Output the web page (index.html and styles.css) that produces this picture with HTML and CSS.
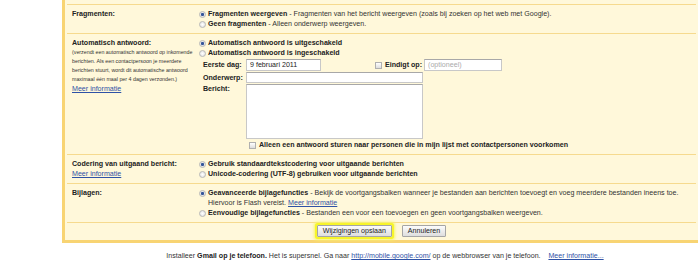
FILE: index.html
```html
<!DOCTYPE html>
<html lang="nl">
<head>
    <meta charset="UTF-8">
    <meta name="viewport" content="width=device-width, initial-scale=1.0">
    <title>Instellingen</title>
    <link rel="stylesheet" href="styles.css">
</head>
<body>
    <div class="settings">
        <div class="row">
            <div class="label">Fragmenten:</div>
            <div class="value">
                <div class="option"><span class="radio on"></span><span><b>Fragmenten weergeven</b> - Fragmenten van het bericht weergeven (zoals bij zoeken op het web met Google).</span></div>
                <div class="option"><span class="radio"></span><span><b>Geen fragmenten</b> - Alleen onderwerp weergeven.</span></div>
            </div>
        </div>

        <div class="row row-auto">
            <div class="label">
                Automatisch antwoord:
                <div class="note">(verzendt een automatisch antwoord op inkomende<br>berichten. Als een contactpersoon je meerdere<br>berichten stuurt, wordt dit automatische antwoord<br>maximaal één maal per 4 dagen verzonden.)</div>
                <a href="#" class="more">Meer informatie</a>
            </div>
            <div class="value">
                <div class="option"><span class="radio on"></span><b>Automatisch antwoord is uitgeschakeld</b></div>
                <div class="option"><span class="radio"></span><b>Automatisch antwoord is ingeschakeld</b></div>
                <div class="fields">
                    <div class="field">
                        <label>Eerste dag:</label>
                        <input type="text" class="date" value="9 februari 2011">
                        <span class="check end-check"></span>
                        <label class="end-label">Eindigt op:</label>
                        <input type="text" class="date end-date" placeholder="(optioneel)">
                    </div>
                    <div class="field">
                        <label>Onderwerp:</label>
                        <input type="text" class="subject">
                    </div>
                    <div class="field">
                        <label>Bericht:</label>
                        <textarea class="message"></textarea>
                    </div>
                    <div class="field contacts">
                        <span class="check"></span><b>Alleen een antwoord sturen naar personen die in mijn lijst met contactpersonen voorkomen</b>
                    </div>
                </div>
            </div>
        </div>

        <div class="row">
            <div class="label">
                Codering van uitgaand bericht:<br>
                <a href="#" class="more">Meer informatie</a>
            </div>
            <div class="value">
                <div class="option"><span class="radio on"></span><b>Gebruik standaardtekstcodering voor uitgaande berichten</b></div>
                <div class="option"><span class="radio"></span><b>Unicode-codering (UTF-8) gebruiken voor uitgaande berichten</b></div>
            </div>
        </div>

        <div class="row">
            <div class="label">Bijlagen:</div>
            <div class="value">
                <div class="option"><span class="radio on"></span><span><b>Geavanceerde bijlagefuncties</b> - Bekijk de voortgangsbalken wanneer je bestanden aan berichten toevoegt en voeg meerdere bestanden ineens toe.<br>Hiervoor is Flash vereist. <a href="#">Meer informatie</a></span></div>
                <div class="option"><span class="radio"></span><span><b>Eenvoudige bijlagefuncties</b> - Bestanden een voor een toevoegen en geen voortgangsbalken weergeven.</span></div>
            </div>
        </div>

        <div class="actions">
            <button class="save">Wijzigingen opslaan</button>
            <button>Annuleren</button>
        </div>
    </div>

    <div class="footer">
        Installeer <b>Gmail op je telefoon.</b> Het is supersnel. Ga naar <a href="#">http://mobile.google.com/</a> op de webbrowser van je telefoon. &nbsp; &nbsp;<a href="#">Meer informatie...</a>
    </div>
</body>
</html>
```

FILE: styles.css
```css
body {
    margin: 0;
    background-color: #fff;
    font-family: "Liberation Sans", Arial, sans-serif;
    font-size: 7.1px;
    line-height: 10px;
    color: #222;
    overflow: hidden;
}

a {
    color: #2f52a6;
}

.settings {
    margin-left: 62px;
    width: 633px;
    padding-top: 4px;
    background-color: #fff8da;
    border-left: 3px solid #f8d473;
    border-bottom: 3px solid #f8d473;
}

.row {
    display: flex;
    margin: 0 2px;
    padding: 4px 0 4px 5px;
    border-top: 1px solid #f6da8e;
}

.label {
    width: 127px;
    flex: none;
    font-weight: bold;
    color: #222;
}

.label .more {
    font-weight: normal;
}

.note {
    margin-top: 0;
    font-weight: normal;
    font-size: 5.3px;
    line-height: 9px;
    color: #333;
    white-space: nowrap;
}

.value {
    flex: 1;
    color: #333;
}

.value b {
    color: #222;
}

.option {
    display: flex;
    align-items: flex-start;
}

.radio {
    flex: none;
    width: 5px;
    height: 5px;
    margin: 2px 2px 0 0;
    border: 1px solid #b8b8b8;
    border-radius: 50%;
    background: radial-gradient(circle, #fff, #ddd);
}

.radio.on {
    background: radial-gradient(circle, #34559a 0, #34559a 1.3px, #e6e6e6 1.8px);
}

.check {
    display: inline-block;
    width: 5px;
    height: 5px;
    margin-right: 3px;
    border: 1px solid #b0b0b0;
    background: linear-gradient(#fff, #ddd);
    vertical-align: -1px;
}

.fields {
    margin-top: 1px;
}

.field {
    display: flex;
    align-items: center;
    margin-bottom: 1px;
}

.field label {
    width: 47px;
    flex: none;
    padding-left: 4px;
    box-sizing: border-box;
    font-weight: bold;
    color: #222;
}

.field input,
.field textarea {
    box-sizing: border-box;
    margin: 0;
    padding: 0 3px;
    border: 1px solid #c8c8c8;
    border-top-color: #a8a8a8;
    background-color: #fff;
    font-family: inherit;
    font-size: 7.1px;
    color: #222;
    outline: none;
}

.date {
    width: 75px;
    height: 12px;
}

.end-check {
    margin-left: 54px;
}

.field .end-label {
    width: auto;
    padding: 0 2px 0 0;
}

.end-date {
    width: 78px;
}

.end-date::placeholder {
    color: #aaa;
}

.subject {
    width: 177px;
    height: 11px;
    margin-top: 1px;
}

.field:nth-child(3) {
    align-items: flex-start;
}

.message {
    width: 177px;
    height: 55px;
    resize: none;
}

.contacts {
    padding-left: 50px;
    margin-bottom: 0;
    line-height: 10px;
}

.actions {
    margin: 0 2px;
    padding: 2px 0 3px;
    border-top: 1px solid #f6da8e;
    text-align: center;
}

.actions button {
    height: 12px;
    margin: 0 4px;
    padding: 0 5px;
    border: 1px solid #a5a5a5;
    border-radius: 1px;
    background: linear-gradient(#fcfcfc, #dedede);
    font-family: inherit;
    font-size: 7.1px;
    line-height: 10px;
    color: #222;
    vertical-align: top;
}

.actions .save {
    box-shadow: 0 0 0 2px #f7f52a, 0 0 3px 3px #f8f66a;
}

.footer {
    margin-top: 8px;
    padding-left: 70px;
    text-align: center;
    color: #333;
}

.footer b {
    color: #222;
}
```
